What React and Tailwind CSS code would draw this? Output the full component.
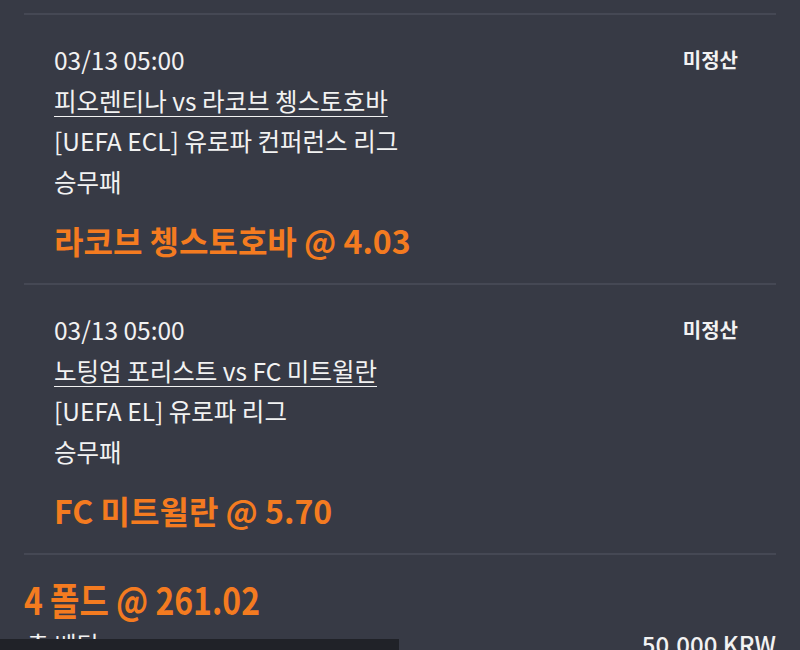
const font = { fontFamily: '"Noto Sans CJK KR", "Noto Sans", sans-serif' };

const bets = [
  {
    time: "03/13 05:00",
    match: "피오렌티나 vs 라코브 쳉스토호바",
    league: "[UEFA ECL] 유로파 컨퍼런스 리그",
    market: "승무패",
    pick: "라코브 쳉스토호바 @ 4.03",
  },
  {
    time: "03/13 05:00",
    match: "노팅엄 포리스트 vs FC 미트윌란",
    league: "[UEFA EL] 유로파 리그",
    market: "승무패",
    pick: "FC 미트윌란 @ 5.70",
  },
];

function BetItem({ bet }) {
  return (
    <div className="border-t-2 border-[#454854] pl-[30px] pr-[38px] pt-[25px] pb-[23px]">
      <div className="flex justify-between items-start">
        <div className="text-[24.5px] leading-[40.5px] text-[#f2f2f2]">
          <div>{bet.time}</div>
          <div className="underline underline-offset-[5px] decoration-1">{bet.match}</div>
          <div>{bet.league}</div>
          <div>{bet.market}</div>
        </div>
        <div className="text-[20px] font-bold text-[#f2f2f2] leading-[40px]">미정산</div>
      </div>
      <div className="mt-[18px] text-[32px] font-bold leading-[40px] text-[#f47b20]">{bet.pick}</div>
    </div>
  );
}

export default function App() {
  return (
    <div className="relative h-[650px] w-[800px] overflow-hidden bg-[#373a45]" style={font}>
      <div className="px-6 pt-[13px]">
        {bets.map((b, i) => (
          <BetItem key={i} bet={b} />
        ))}
        <div className="border-t-2 border-[#454854]">
          <div className="mt-[24px] origin-left scale-x-[0.84] text-[38px] font-semibold leading-[40px] text-[#f47b20]">
            4 폴드 @ 261.02
          </div>
          <div className="mt-[10px] flex justify-between pl-[3px] text-[24px] leading-[30px] text-[#f2f2f2]">
            <span>총 베팅</span>
            <span className="font-medium">50,000 KRW</span>
          </div>
        </div>
      </div>
      <div className="absolute bottom-0 left-0 h-[11px] w-[399px] bg-[#202228]" />
    </div>
  );
}
